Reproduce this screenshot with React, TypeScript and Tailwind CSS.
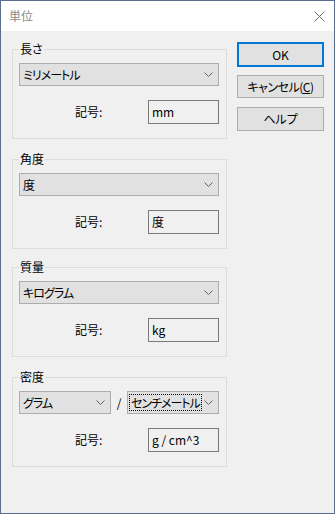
import React from 'react';

const font = { fontFamily: '"Noto Sans CJK JP", "Noto Sans", sans-serif' };

const Chevron = () => (
  <svg width="9" height="5" viewBox="0 0 9 5" className="shrink-0">
    <path d="M0.5 0.5 L4.5 4.5 L8.5 0.5" fill="none" stroke="#606060" strokeWidth="1" />
  </svg>
);

const Combo = ({ value, className = '', focused = false }: { value: string; className?: string; focused?: boolean }) => (
  <div className={`h-[23px] bg-[#e1e1e1] border border-[#adadad] flex items-center justify-between pl-[2px] pr-[5px] ${className}`}>
    <span
      className={`whitespace-nowrap tracking-[-1px] leading-[15px] px-[1px] ${focused ? 'outline outline-1 outline-dotted outline-black' : ''}`}
    >
      {value}
    </span>
    <Chevron />
  </div>
);

const SymbolRow = ({ value }: { value: string }) => (
  <div className="flex items-center mt-[14px] h-[24px]">
    <span className="ml-[56px] w-[73px]">記号:</span>
    <div className="w-[71px] h-[24px] border border-[#7a7a7a] bg-[#f0f0f0] flex items-center px-[3px] whitespace-nowrap">
      {value}
    </div>
  </div>
);

const Group = ({ label, className = '', children }: { label: string; className?: string; children: React.ReactNode }) => (
  <div className={`relative w-[215px] h-[90px] border border-[#dcdcdc] px-[6px] pt-[13px] ${className}`}>
    <span className="absolute -top-[9px] left-[6px] bg-[#f0f0f0] px-[1px] leading-[16px]">{label}</span>
    {children}
  </div>
);

export default function App() {
  return (
    <div
      className="w-[335px] h-[514px] border border-[#5a6f8c] bg-[#f0f0f0] flex flex-col text-[12px] text-black [font-feature-settings:'palt']"
      style={font}
    >
      {/* Title bar */}
      <div className="h-[30px] bg-white flex items-center justify-between shrink-0">
        <span className="ml-[8px] text-[#8a8a8a]">単位</span>
        <svg width="11" height="11" viewBox="0 0 11 11" className="mr-[9px]">
          <path d="M0.5 0.5 L10.5 10.5 M10.5 0.5 L0.5 10.5" stroke="#707070" strokeWidth="1" fill="none" />
        </svg>
      </div>

      <div className="flex flex-1">
        {/* Groups */}
        <div className="flex flex-col ml-[11px]">
          <Group label="長さ" className="mt-[18px]">
            <Combo value="ミリメートル" className="w-[200px]" />
            <SymbolRow value="mm" />
          </Group>
          <Group label="角度" className="mt-[20px]">
            <Combo value="度" className="w-[200px]" />
            <SymbolRow value="度" />
          </Group>
          <Group label="質量" className="mt-[18px]">
            <Combo value="キログラム" className="w-[200px]" />
            <SymbolRow value="kg" />
          </Group>
          <Group label="密度" className="mt-[20px]">
            <div className="flex items-center">
              <Combo value="グラム" className="w-[92px]" />
              <span className="w-[16px] text-center">/</span>
              <Combo value="センチメートル" className="w-[92px]" focused />
            </div>
            <SymbolRow value="g / cm^3" />
          </Group>
        </div>

        {/* Buttons */}
        <div className="flex flex-col ml-[10px] mt-[11px]">
          <button className="w-[87px] h-[25px] bg-[#e1e1e1] border-2 border-[#0078d7]">OK</button>
          <button className="w-[87px] h-[23px] mt-[8px] bg-[#e1e1e1] border border-[#adadad] whitespace-nowrap tracking-[-0.5px]">
            キャンセル(<span className="underline">C</span>)
          </button>
          <button className="w-[87px] h-[24px] mt-[9px] bg-[#e1e1e1] border border-[#adadad]">ヘルプ</button>
        </div>
      </div>
    </div>
  );
}
